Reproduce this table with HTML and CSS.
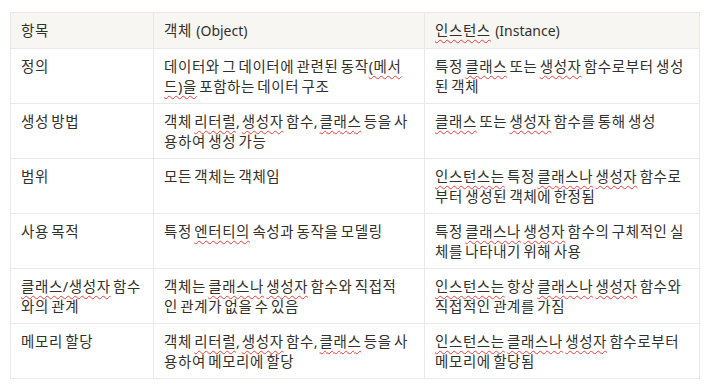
FILE: index.html
```html
<!DOCTYPE html>
<html lang="ko">
<head>
<meta charset="utf-8">
<link rel="stylesheet" href="styles.css">
</head>
<body>
<table class="cmp">
  <colgroup>
    <col class="c1"><col class="c2"><col class="c3">
  </colgroup>
  <thead>
    <tr><th>항목</th><th>객체 <span class="en">(Object)</span></th><th><span class="sp">인스턴스</span> <span class="en">(Instance)</span></th></tr>
  </thead>
  <tbody>
    <tr>
      <td>정의</td>
      <td>데이터와 그 데이터에 관련된 동작<span class="sp">(메서드)을</span> 포함하는 데이터 구조</td>
      <td>특정 <span class="sp">클래스</span> 또는 <span class="sp">생성자</span> 함수로부터 생성된 객체</td>
    </tr>
    <tr>
      <td>생성 방법</td>
      <td>객체 <span class="sp">리터럴</span><span class="cm">,</span> <span class="sp">생성자</span> 함수<span class="cm">,</span> <span class="sp">클래스</span> 등을 사용하여 생성 가능</td>
      <td><span class="sp">클래스</span> 또는 <span class="sp">생성자</span> 함수를 통해 생성</td>
    </tr>
    <tr>
      <td>범위</td>
      <td>모든 객체는 객체임</td>
      <td><span class="sp">인스턴스는</span> 특정 <span class="sp">클래스나</span> <span class="sp">생성자</span> 함수로부터 생성된 객체에 한정됨</td>
    </tr>
    <tr>
      <td>사용 목적</td>
      <td>특정 <span class="sp">엔터티의</span> 속성과 동작을 모델링</td>
      <td>특정 <span class="sp">클래스나</span> <span class="sp">생성자</span> 함수의 구체적인 실체를 나타내기 위해 사용</td>
    </tr>
    <tr>
      <td><span class="sp">클래스/생성자</span> 함수와의 관계</td>
      <td>객체는 <span class="sp">클래스나</span> <span class="sp">생성자</span> 함수와 직접적인 관계가 없을 수 있음</td>
      <td><span class="sp">인스턴스는</span> 항상 <span class="sp">클래스나</span> <span class="sp">생성자</span> 함수와 직접적인 관계를 가짐</td>
    </tr>
    <tr>
      <td>메모리 할당</td>
      <td>객체 <span class="sp">리터럴</span><span class="cm">,</span> <span class="sp">생성자</span> 함수<span class="cm">,</span> <span class="sp">클래스</span> 등을 사용하여 메모리에 할당</td>
      <td><span class="sp">인스턴스는</span> <span class="sp">클래스나</span> <span class="sp">생성자</span> 함수로부터 메모리에 할당됨</td>
    </tr>
  </tbody>
</table>
</body>
</html>
```

FILE: styles.css
```css
html, body {
  margin: 0;
  background: #ffffff;
}
body {
  padding: 12px 0 0 10px;
  font-family: "Noto Sans", "Noto Sans CJK KR", sans-serif;
  font-size: 14.5px;
  color: #32302b;
}
.cmp {
  border-collapse: collapse;
  table-layout: fixed;
  width: 689px;
}
.c1 { width: 143px; }
.c2 { width: 271px; }
.c3 { width: 275px; }
.cmp th,
.cmp td {
  border: 1px solid #e9e9e7;
  padding: 7px 11px 7px 10px;
  line-height: 20px;
  letter-spacing: 0.6px;
  word-spacing: -2px;
  text-align: left;
  vertical-align: top;
  font-weight: normal;
}
.cmp th:nth-child(2),
.cmp td:nth-child(2) {
  padding-right: 14.2px;
}
.cmp thead th {
  background: #f7f6f3;
  word-spacing: 0;
}
.cmp td {
  height: 40px;
}
.en {
  font-size: 14px;
  letter-spacing: 0;
  word-spacing: 0;
}
.cm {
  letter-spacing: -0.6px;
}
.sp {
  text-decoration-line: underline;
  text-decoration-style: wavy;
  text-decoration-color: #f23b3b;
  text-decoration-thickness: 1px;
  text-underline-offset: 3px;
}
```
